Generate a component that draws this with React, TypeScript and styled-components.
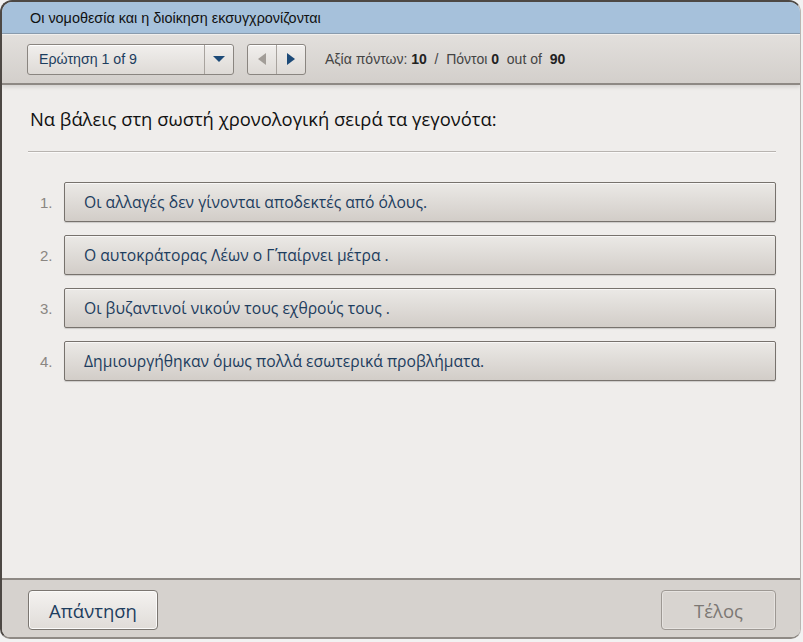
import React from "react";
import styled, { createGlobalStyle } from "styled-components";

const GlobalStyle = createGlobalStyle`
  html, body {
    margin: 0;
    padding: 0;
    background: #f2f2f2;
  }
`;

const Window = styled.div`
  box-sizing: border-box;
  width: 801px;
  height: 639px;
  display: flex;
  flex-direction: column;
  border-top: 2px solid #4d4844;
  border-left: 2px solid #4d4844;
  border-right: 1px solid #b9b5b1;
  border-bottom: 2px solid #8f8a85;
  border-radius: 12px 12px 10px 10px;
  overflow: hidden;
  background: #efedeb;
`;

const TitleBar = styled.div`
  height: 31px;
  flex: none;
  display: flex;
  align-items: center;
  padding-left: 28px;
  background: #a6c1db;
  border-bottom: 1px solid #8b9db0;
  font-family: "Liberation Sans", Arial, sans-serif;
  font-size: 14.4px;
  color: #111;
`;

const Toolbar = styled.div`
  height: 48px;
  flex: none;
  display: flex;
  align-items: center;
  padding-left: 25px;
  background: linear-gradient(#e2dfdc, #d3cfcb);
  border-top: 1px solid #f1efed;
  border-bottom: 2px solid #8e8984;
  box-shadow: 0 2px 4px rgba(0, 0, 0, 0.12);
  font-family: "Liberation Sans", Arial, sans-serif;
`;

const Control = styled.div<{ $width: number }>`
  box-sizing: border-box;
  width: ${(p) => p.$width}px;
  height: 31px;
  display: flex;
  align-items: stretch;
  border: 1px solid #8a8580;
  border-radius: 3px;
  background: linear-gradient(#f1efed, #dedad6);
  box-shadow: inset 0 1px 0 #fff;
`;

const SelectLabel = styled.div`
  flex: 1;
  display: flex;
  align-items: center;
  padding-left: 11px;
  font-size: 14.2px;
  color: #1d3d5e;
  border-right: 1px solid #a8a39e;
`;

const Segment = styled.div<{ $divider?: boolean }>`
  width: 28px;
  display: flex;
  align-items: center;
  justify-content: center;
  border-right: ${(p) => (p.$divider ? "1px solid #a8a39e" : "none")};
`;

const Score = styled.div`
  margin-left: 19px;
  font-size: 14px;
  color: #444;
  b {
    font-weight: bold;
    color: #222;
  }
`;

const Content = styled.div`
  flex: 1;
  padding: 21px 24px 0 26px;
`;

const Question = styled.div`
  font-family: "Open Sans", "Noto Sans", sans-serif;
  font-size: 18.4px;
  color: #111;
  padding-left: 2px;
`;

const Rule = styled.div`
  margin-top: 20px;
  height: 1px;
  background: #b8b4b0;
  box-shadow: 0 1px 0 #fbfaf9;
`;

const List = styled.div`
  margin-top: 30px;
  display: flex;
  flex-direction: column;
  gap: 13px;
`;

const Row = styled.div`
  display: flex;
  align-items: center;
`;

const Num = styled.div`
  width: 36px;
  padding-left: 12px;
  box-sizing: border-box;
  font-family: "Liberation Sans", Arial, sans-serif;
  font-size: 15px;
  color: #8a8682;
`;

const Item = styled.div`
  flex: 1;
  height: 40px;
  box-sizing: border-box;
  display: flex;
  align-items: center;
  padding-left: 19px;
  border: 1px solid #77726d;
  border-radius: 2px;
  background: linear-gradient(#ebe9e6, #d2cdc8);
  box-shadow: inset 0 1px 0 #f8f7f6, 0 1px 1px rgba(0, 0, 0, 0.15);
  font-family: "Open Sans", "Noto Sans", sans-serif;
  font-size: 15.7px;
  color: #1d3d5e;
`;

const Footer = styled.div`
  height: 57px;
  flex: none;
  display: flex;
  align-items: center;
  justify-content: space-between;
  padding: 0 24px 0 26px;
  background: #d6d2ce;
  border-top: 2px solid #8e8984;
`;

const FooterButton = styled.button<{ $width: number; $disabled?: boolean }>`
  width: ${(p) => p.$width}px;
  height: 40px;
  margin-top: 3px;
  border: 1px solid ${(p) => (p.$disabled ? "#9d9893" : "#7b7671")};
  border-radius: 4px;
  background: ${(p) =>
    p.$disabled ? "#d8d4d0" : "linear-gradient(#f4f2f0, #e0dcd8)"};
  box-shadow: inset 0 0 0 1px ${(p) => (p.$disabled ? "#e6e3e0" : "#fbfaf9")};
  font-family: "Open Sans", "Noto Sans", sans-serif;
  font-size: 18.5px;
  color: ${(p) => (p.$disabled ? "#7c7874" : "#1d3d5e")};
  padding: 0;
`;

const Caret = ({ dir, color }: { dir: "down" | "left" | "right"; color: string }) => {
  const pts =
    dir === "down" ? "0,0 12,0 6,6" : dir === "left" ? "8,0 8,12 0,6" : "0,0 8,6 0,12";
  const w = dir === "down" ? 12 : 8;
  const h = dir === "down" ? 6 : 12;
  return (
    <svg width={w} height={h} viewBox={`0 0 ${w} ${h}`}>
      <polygon points={pts} fill={color} />
    </svg>
  );
};

const items = [
  "Οι αλλαγές δεν γίνονται αποδεκτές από όλους.",
  "Ο αυτοκράτορας Λέων ο Γ\u0374παίρνει μέτρα .",
  "Οι βυζαντινοί νικούν τους εχθρούς τους .",
  "Δημιουργήθηκαν όμως πολλά εσωτερικά προβλήματα.",
];

export default function App() {
  return (
    <>
      <GlobalStyle />
      <Window>
        <TitleBar>Οι νομοθεσία και η διοίκηση εκσυγχρονίζονται</TitleBar>
        <Toolbar>
          <Control $width={207}>
            <SelectLabel>Ερώτηση 1 of 9</SelectLabel>
            <Segment>
              <Caret dir="down" color="#1d4a78" />
            </Segment>
          </Control>
          <Control $width={59} style={{ marginLeft: 13 }}>
            <Segment $divider>
              <Caret dir="left" color="#a29d98" />
            </Segment>
            <Segment>
              <Caret dir="right" color="#1d4a78" />
            </Segment>
          </Control>
          <Score>
            Αξία πόντων: <b>10</b>&nbsp; / &nbsp;Πόντοι <b>0</b>&nbsp; out of&nbsp; <b>90</b>
          </Score>
        </Toolbar>
        <Content>
          <Question>Να βάλεις στη σωστή χρονολογική σειρά τα γεγονότα:</Question>
          <Rule />
          <List>
            {items.map((text, i) => (
              <Row key={i}>
                <Num>{i + 1}.</Num>
                <Item>{text}</Item>
              </Row>
            ))}
          </List>
        </Content>
        <Footer>
          <FooterButton $width={130}>Απάντηση</FooterButton>
          <FooterButton $width={115} $disabled>
            Τέλος
          </FooterButton>
        </Footer>
      </Window>
    </>
  );
}
